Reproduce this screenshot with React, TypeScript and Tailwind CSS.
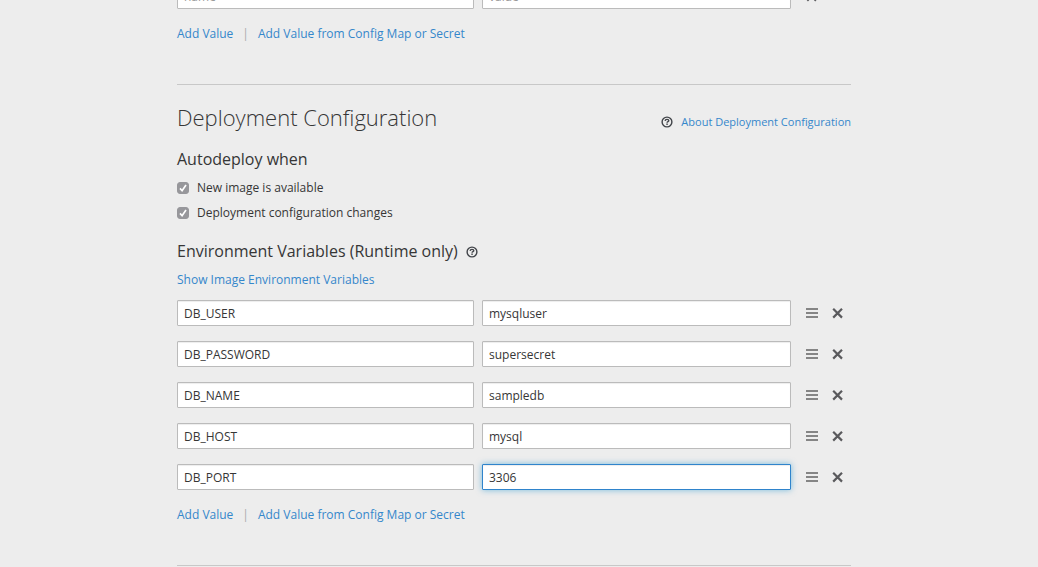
import { useState } from "react";

type Variable = { name: string; value: string };

const initialVariables: Variable[] = [
  { name: "DB_USER", value: "mysqluser" },
  { name: "DB_PASSWORD", value: "supersecret" },
  { name: "DB_NAME", value: "sampledb" },
  { name: "DB_HOST", value: "mysql" },
  { name: "DB_PORT", value: "3306" },
];

const inputBase =
  "h-[26px] w-full min-w-0 rounded-[1px] border bg-white px-1.5 text-xs text-[#363636] outline-none placeholder:text-[#999999]";
const inputIdle = "border-[#bbbbbb] shadow-[inset_0_1px_1px_rgba(3,3,3,0.075)]";
const inputActive =
  "border-[#2f84cc] shadow-[inset_0_1px_1px_rgba(3,3,3,0.075),0_0_6px_rgba(0,136,206,0.5)]";

function HelpIcon() {
  return (
    <svg viewBox="0 0 12 12" className="size-3 shrink-0" fill="none" aria-hidden="true">
      <circle cx="6" cy="6" r="4.9" stroke="#414449" strokeWidth="1.4" />
      <path
        d="M4.1 4.9C4.2 3.9 5 3.4 6 3.4s1.8.5 1.8 1.3c0 1-1.7 1-1.7 2"
        stroke="#414449"
        strokeWidth="1.4"
      />
      <rect x="5.3" y="7.5" width="1.5" height="1.4" fill="#414449" />
    </svg>
  );
}

function RemoveIcon() {
  return (
    <svg viewBox="0 0 12 12" className="size-3" aria-hidden="true">
      <path d="M1.2 1.8l8.8 8.8M10 1.8l-8.8 8.8" stroke="#5a5a5d" strokeWidth="2.2" />
    </svg>
  );
}

function DragIcon() {
  return (
    <svg viewBox="0 0 12 12" className="size-3" aria-hidden="true">
      <path d="M0 2h12M0 6h12M0 10h12" stroke="#858585" strokeWidth="2" />
    </svg>
  );
}

function CheckOption({ label }: { label: string }) {
  return (
    <label className="flex items-center gap-2 leading-5">
      <span className="grid size-3 place-items-center">
        <input
          type="checkbox"
          defaultChecked
          className="peer col-start-1 row-start-1 size-3 appearance-none rounded-[3px] border border-[#97979b] bg-white checked:bg-[#97979b]"
        />
        <svg
          viewBox="0 0 12 12"
          className="pointer-events-none col-start-1 row-start-1 hidden size-3 peer-checked:block"
          fill="none"
          aria-hidden="true"
        >
          <path d="M3 6.4L5.1 8.7L9 3.1" stroke="white" strokeWidth="1.7" />
        </svg>
      </span>
      {label}
    </label>
  );
}

function AddLinks() {
  return (
    <div className="mt-[15px] flex leading-5">
      <a href="#add" className="text-[#3587cb]">
        Add Value
      </a>
      <span className="px-[9px] text-[#aaaaaa]" aria-hidden="true">
        |
      </span>
      <a href="#add-from" className="text-[#3587cb]">
        Add Value from Config Map or Secret
      </a>
    </div>
  );
}

function VariableRow({
  variable,
  active = false,
  draggable = true,
  onRemove,
}: {
  variable: Variable;
  active?: boolean;
  draggable?: boolean;
  onRemove?: () => void;
}) {
  return (
    <div className="flex items-center">
      <div className="grid flex-1 grid-cols-[297fr_309fr] gap-2">
        <input
          aria-label="Name"
          placeholder="name"
          defaultValue={variable.name}
          className={inputBase + " " + inputIdle}
        />
        <input
          aria-label="Value"
          placeholder="value"
          defaultValue={variable.value}
          className={inputBase + " " + (active ? inputActive : inputIdle)}
        />
      </div>
      <div className="flex w-[60px] gap-3.5 pl-[15px]">
        {draggable && (
          <button type="button" aria-label="Reorder">
            <DragIcon />
          </button>
        )}
        <button type="button" aria-label="Remove" onClick={onRemove}>
          <RemoveIcon />
        </button>
      </div>
    </div>
  );
}

export default function App() {
  const [variables, setVariables] = useState(initialVariables);

  return (
    <main className="min-h-screen overflow-hidden bg-[#ededed] pr-2.5 font-['Open_Sans',sans-serif] text-xs text-[#363636]">
      <div className="mx-auto w-full max-w-[674px]">
        <section className="-mt-[17px] pb-10">
          <VariableRow variable={{ name: "", value: "" }} draggable={false} />
          <AddLinks />
        </section>

        <section className="border-t border-[#c8c8c8] pt-4 pb-10">
          <div className="flex items-center justify-between">
            <h2 className="text-[22px] leading-8 font-light">Deployment Configuration</h2>
            <div className="flex items-center gap-2 pt-2.5 text-[11px] leading-4">
              <HelpIcon />
              <a href="#about" className="text-[#3587cb]">
                About Deployment Configuration
              </a>
            </div>
          </div>

          <h3 className="mt-4 text-base leading-5">Autodeploy when</h3>
          <div className="mt-[9px] flex flex-col items-start gap-[5px]">
            <CheckOption label="New image is available" />
            <CheckOption label="Deployment configuration changes" />
          </div>

          <div className="mt-[18px] flex items-center gap-2">
            <h3 className="text-base leading-5">Environment Variables (Runtime only)</h3>
            <button type="button" aria-label="Help" className="pt-0.5">
              <HelpIcon />
            </button>
          </div>
          <div className="mt-[9px] leading-5">
            <a href="#show" className="text-[#3587cb]">
              Show Image Environment Variables
            </a>
          </div>

          <div className="mt-2.5 flex flex-col gap-[15px]">
            {variables.map((variable) => (
              <VariableRow
                key={variable.name}
                variable={variable}
                active={variable.name === "DB_PORT"}
                onRemove={() => setVariables(variables.filter((v) => v !== variable))}
              />
            ))}
          </div>
          <AddLinks />
        </section>

        <hr className="border-[#c8c8c8]" />
      </div>
    </main>
  );
}
